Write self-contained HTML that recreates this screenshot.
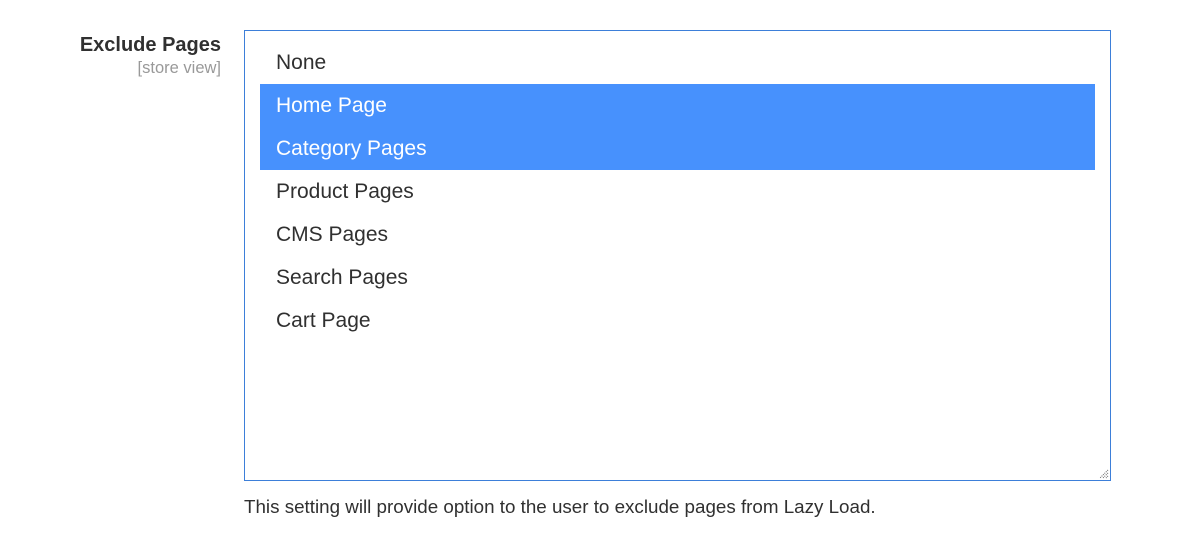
<!DOCTYPE html>
<html><head><style>
body{margin:0;background:#fff;font-family:"Liberation Sans",sans-serif;width:1191px;height:547px;position:relative;overflow:hidden}
.lbl{position:absolute;right:970px;top:32px;text-align:right;color:#303030}
.lbl .t{font-size:20px;font-weight:bold;line-height:26px;letter-spacing:0px}
.lbl .s{font-size:16.5px;color:#999;line-height:20px}
.box{position:absolute;left:244px;top:30px;width:865px;height:449px;border:1px solid #3d7fd9;}
.opt{position:absolute;left:15px;width:835px;height:43px;line-height:43px;font-size:21px;color:#303030;padding-left:16px;box-sizing:border-box}
.sel{background:#4791fd;color:#fff}
.help{position:absolute;left:244px;top:496px;font-size:18.8px;color:#303030}
</style></head><body>
<div class="lbl"><div class="t">Exclude Pages</div><div class="s">[store view]</div></div>
<div class="box">
<div class="opt" style="top:10px">None</div>
<div class="opt sel" style="top:53px">Home Page</div>
<div class="opt sel" style="top:96px">Category Pages</div>
<div class="opt" style="top:139px">Product Pages</div>
<div class="opt" style="top:182px">CMS Pages</div>
<div class="opt" style="top:225px">Search Pages</div>
<div class="opt" style="top:268px">Cart Page</div>
<svg style="position:absolute;right:1px;bottom:1px" width="10" height="10"><path d="M9 1L1 9M9 4L4 9M9 7L7 9" stroke="#666" stroke-width="1" stroke-dasharray="1 1"/></svg>
</div>
<div class="help">This setting will provide option to the user to exclude pages from Lazy Load.</div>
</body></html>
